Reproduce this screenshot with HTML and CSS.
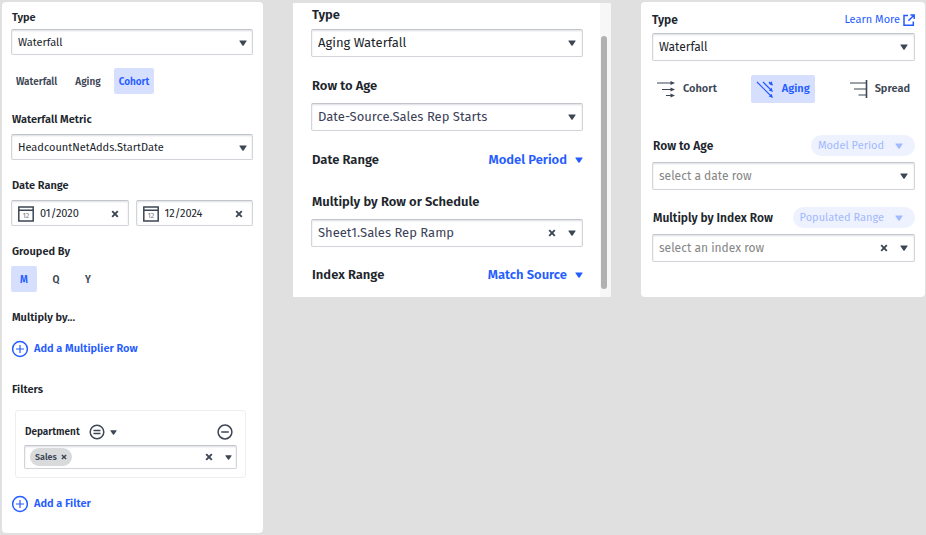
FILE: index.html
```
<!DOCTYPE html>
<html lang="en">
<head>
<meta charset="utf-8">
<meta name="viewport" content="width=device-width, initial-scale=1">
<title>Waterfall settings</title>
<link rel="stylesheet" href="styles.css">
</head>
<body>
<svg class="defs" aria-hidden="true">
  <symbol id="caret" viewBox="0 0 8 6"><path d="M.8 .4h6.4q.8 0 .4.7L4.600 5.400q-.6.6-1.200 0L.4 1.100Q0 .4.8.4z" fill="currentColor"/></symbol>
  <symbol id="cross" viewBox="0 0 8 8"><path d="M1.2 1.2l5.6 5.6M6.800 1.200L1.200 6.800" stroke="currentColor" stroke-width="1.9" fill="none"/></symbol>
  <symbol id="plus" viewBox="0 0 18 18"><circle cx="9" cy="9" r="7.4" fill="none" stroke="currentColor" stroke-width="1.5"/><path d="M5 9h8M9 5v8" stroke="currentColor" stroke-width="1.2"/></symbol>
</svg>
<main class="board">
  <form class="panel compact">
    <div class="field first">
      <label for="a-type">Type</label>
      <div class="box"><select id="a-type"><option>Waterfall</option></select><svg class="caret"><use href="#caret"/></svg></div>
    </div>
    <div class="tabs">
      <button type="button">Waterfall</button>
      <button type="button">Aging</button>
      <button type="button" class="active">Cohort</button>
    </div>
    <div class="field">
      <label for="a-metric">Waterfall Metric</label>
      <div class="box"><select id="a-metric"><option>HeadcountNetAdds.StartDate</option></select><svg class="caret"><use href="#caret"/></svg></div>
    </div>
    <div class="field">
      <label for="a-from">Date Range</label>
      <div class="dates">
        <div class="box date"><svg class="cal" viewBox="0 0 16 16"><path d="M.8 1h14.4v14H.8zM1 4.200h14"/><text x="8" y="12" text-anchor="middle">12</text></svg><input id="a-from" type="text" value="01/2020"><button type="button" class="clear" aria-label="Clear"><svg><use href="#cross"/></svg></button></div>
        <div class="box date"><svg class="cal" viewBox="0 0 16 16"><path d="M.8 1h14.4v14H.8zM1 4.200h14"/><text x="8" y="12" text-anchor="middle">12</text></svg><input type="text" value="12/2024" aria-label="End date"><button type="button" class="clear" aria-label="Clear"><svg><use href="#cross"/></svg></button></div>
      </div>
    </div>
    <div class="field">
      <h2>Grouped By</h2>
      <div class="periods">
        <button type="button" class="active">M</button>
        <button type="button">Q</button>
        <button type="button">Y</button>
      </div>
    </div>
    <div class="field">
      <h2>Multiply by...</h2>
      <button type="button" class="add"><svg><use href="#plus"/></svg>Add a Multiplier Row</button>
    </div>
    <div class="field filters">
      <h2>Filters</h2>
      <div class="filter">
        <div class="filter-head">
          <label for="a-dept">Department</label>
          <button type="button" class="operator" aria-label="Equals"><svg class="round" viewBox="0 0 16 16"><circle cx="8" cy="8" r="6.8"/><path d="M4.5 6.600h7M4.500 9.400h7"/></svg><svg class="caret"><use href="#caret"/></svg></button>
          <button type="button" class="remove" aria-label="Remove filter"><svg class="round" viewBox="0 0 16 16"><circle cx="8" cy="8" r="6.9"/><path d="M4.200 8h7.600"/></svg></button>
        </div>
        <div class="box multi">
          <span class="chip">Sales<button type="button" class="clear" aria-label="Remove Sales"><svg><use href="#cross"/></svg></button></span>
          <input id="a-dept" type="text">
          <button type="button" class="clear" aria-label="Clear"><svg><use href="#cross"/></svg></button>
          <svg class="caret"><use href="#caret"/></svg>
        </div>
      </div>
      <button type="button" class="add"><svg><use href="#plus"/></svg>Add a Filter</button>
    </div>
  </form>

  <form class="panel scrolling">
    <div class="content">
      <div class="field first">
        <label for="b-type">Type</label>
        <div class="box"><select id="b-type"><option>Aging Waterfall</option></select><svg class="caret"><use href="#caret"/></svg></div>
      </div>
      <div class="field">
        <label for="b-row">Row to Age</label>
        <div class="box slate"><select id="b-row"><option>Date-Source.Sales Rep Starts</option></select><svg class="caret"><use href="#caret"/></svg></div>
      </div>
      <div class="field line">
        <h2>Date Range</h2>
        <button type="button" class="menu">Model Period<svg class="caret"><use href="#caret"/></svg></button>
      </div>
      <div class="field">
        <label for="b-mult">Multiply by Row or Schedule</label>
        <div class="box slate"><select id="b-mult"><option>Sheet1.Sales Rep Ramp</option></select><button type="button" class="clear" aria-label="Clear"><svg><use href="#cross"/></svg></button><svg class="caret"><use href="#caret"/></svg></div>
      </div>
      <div class="field line last">
        <h2>Index Range</h2>
        <button type="button" class="menu">Match Source<svg class="caret"><use href="#caret"/></svg></button>
      </div>
    </div>
    <div class="track"><div class="thumb"></div></div>
  </form>

  <form class="panel wide">
    <div class="field first">
      <div class="head"><label for="c-type">Type</label><a href="#learn">Learn More<svg viewBox="0 0 12 12"><path d="M5 1.500H1v9.700h9.300V7.500M7.400.900h3.800v4M11.200 1L5.400 6.800"/></svg></a></div>
      <div class="box"><select id="c-type"><option>Waterfall</option></select><svg class="caret"><use href="#caret"/></svg></div>
    </div>
    <div class="modes">
      <button type="button"><svg viewBox="0 0 20 18"><path class="thin" d="M0 3h14M5 9.500h9M9 15.500h5"/><path class="tip" d="M13.500 1l4.500 2-4.500 2zM13.500 7.500l4.500 2-4.500 2zM13.500 13.500l4.500 2-4.500 2z"/></svg>Cohort</button>
      <button type="button" class="active"><svg viewBox="0 0 20 18"><path class="thin" d="M1 2l14 14M7 2l8.500 8.500M13 2l3 3"/><path class="tip" d="M17 18l-4.200-1.600 2.800-2.600zM17 12l-4.200-1.600 2.800-2.600zM17 5.500l-4.200-1.600 2.800-2.600z"/></svg>Aging</button>
      <button type="button"><svg viewBox="0 0 20 18"><path class="thin" d="M1 3h16M5 9h12M9.500 15h8"/><path class="wall" d="M17.500 0v18"/></svg>Spread</button>
    </div>
    <div class="field">
      <div class="head"><label for="c-row">Row to Age</label><button type="button" class="pill" disabled>Model Period<svg class="caret"><use href="#caret"/></svg></button></div>
      <div class="box empty"><select id="c-row"><option>select a date row</option></select><svg class="caret"><use href="#caret"/></svg></div>
    </div>
    <div class="field">
      <div class="head"><label for="c-mult">Multiply by Index Row</label><button type="button" class="pill" disabled>Populated Range<svg class="caret"><use href="#caret"/></svg></button></div>
      <div class="box empty"><select id="c-mult"><option>select an index row</option></select><button type="button" class="clear" aria-label="Clear"><svg><use href="#cross"/></svg></button><svg class="caret"><use href="#caret"/></svg></div>
    </div>
  </form>
</main>
</body>
</html>
```
FILE: styles.css
```
:root {
  --ink: #20252c;
  --slate: #3c4654;
  --blue: #245cff;
  --tint: #d7dfff;
  --line: #d3d4d9;
}
* { box-sizing: border-box; }
body {
  margin: 0;
  background: #e0e0e0;
  color: var(--ink);
  font-family: "Fira Sans", "Noto Sans", sans-serif;
  font-size: 12px;
  line-height: 16px;
}
.defs { position: absolute; width: 0; height: 0; }
button, input, select {
  margin: 0;
  padding: 0;
  border: 0;
  background: none;
  color: inherit;
  font: inherit;
  appearance: none;
}
button, a { display: inline-flex; align-items: center; }
svg { display: block; flex: none; }
h2, label {
  display: block;
  margin: 0;
  padding-left: 1px;
  font-size: inherit;
  font-weight: 600;
  white-space: nowrap;
}

.board {
  display: grid;
  grid-template-columns: 261fr 318fr 284fr;
  gap: 30px;
  align-items: start;
  padding: 2px 1px 2px 2px;
}
.panel { background: #fff; border-radius: 4px; min-width: 0; }

.box {
  display: flex;
  align-items: center;
  gap: 12px;
  height: 28px;
  padding: 0 6px;
  border: 1px solid var(--line);
  border-top-color: #c2c5cc;
  border-radius: 2px;
  background: #fff;
  box-shadow: inset 0 1px 2px #dcdde2;
}
.box select, .box input { flex: 1; min-width: 0; width: 0; }
.slate { color: #3b3f58; }
.empty select { color: #858585; }
.caret { width: 8px; height: 6px; color: var(--slate); }
.clear { color: var(--slate); }
.clear svg { width: 8px; height: 8px; }
.active { background: var(--tint); color: var(--blue); border-radius: 2px; }

/* Cohort panel */
.compact { padding: 8px 10px 20px 9px; font-size: 11px; }
.compact .field { margin-top: 18px; }
.compact .field > label, .compact .field > h2 { margin-bottom: 6px; }
.compact .first { margin-top: 0; }
.compact .first > label { margin-bottom: 3px; }
.compact .box { height: 26px; padding: 1px 5px 0 6px; }
.tabs { display: flex; gap: 8px; margin-top: 13px; }
.tabs button, .periods button {
  height: 26px;
  padding: 1px 5px 0;
  color: var(--slate);
  font-size: 10px;
  font-weight: 600;
}
.periods { display: flex; gap: 6px; }
.periods button { width: 26px; justify-content: center; }
.compact button.active { color: var(--blue); }
.dates { display: grid; grid-template-columns: 1fr 1fr; gap: 7px; }
.compact .date { gap: 6px; padding-right: 9px; }
.cal { width: 16px; height: 16px; fill: none; stroke: var(--slate); stroke-width: 1.5; }
.cal text { font-size: 7px; fill: #6d7580; stroke: none; }
.add { gap: 5px; color: var(--blue); font-weight: 600; }
.add svg { width: 18px; height: 18px; }
.compact .field > .add { display: flex; margin-top: 14px; height: 18px; }
.compact .filters { margin-top: 24px; }
.filter {
  margin: 12px 7px 0 4px;
  padding: 12px 8px 8px;
  border: 1px solid #eeeeef;
  border-radius: 3px;
}
.filter-head { display: flex; align-items: center; height: 18px; margin-bottom: 4px; font-size: 10px; }
.operator { gap: 5px; margin-left: 9px; color: var(--slate); }
.remove { margin-left: auto; margin-right: 4px; color: var(--slate); }
.round { width: 16px; height: 16px; fill: none; stroke: currentColor; stroke-width: 1.5; }
.compact .multi { height: 24px; padding: 0 4px 0 5px; }
.filter .caret { width: 7px; height: 5px; }
.chip {
  display: flex;
  align-items: center;
  gap: 4px;
  height: 18px;
  padding: 0 5px;
  border-radius: 9px;
  background: #d9dadc;
  color: var(--slate);
  font-size: 9px;
  font-weight: 600;
}
.chip .clear svg { width: 6px; height: 6px; }
.compact .filters > .add { margin-top: 17px; }

/* Aging panel */
.scrolling { display: flex; margin-top: 1px; border-radius: 0; font-size: 13px; }
.content { flex: 1; min-width: 0; padding: 4px 17px 14px 18px; }
.scrolling .field { margin-top: 21px; }
.scrolling .first { margin-top: 0; }
.scrolling .field > label { margin-bottom: 9px; }
.scrolling .first > label { margin-bottom: 6px; }
.line { display: flex; justify-content: space-between; padding-bottom: 5px; }
.scrolling .last { padding-bottom: 0; }
.scrolling .last { margin-top: 20px; }
.menu { gap: 8px; color: var(--blue); font-weight: 600; }
.menu .caret, .pill .caret { color: inherit; }
.track { width: 11px; padding: 33px 4px 8px 1px; background: #f7f7f8; display: flex; }
.thumb { flex: 1; border-radius: 3px; background: #b1b1b1; }

/* Mode panel */
.wide { padding: 7px 10px 35px 11px; }
.wide .head { display: flex; align-items: center; justify-content: space-between; height: 21px; margin-bottom: 6px; }
.wide .first .head { margin-bottom: 3px; }
.wide .field { margin-top: 17px; }
.wide .first { margin-top: 0; }
.wide .first label { padding-left: 0; }
.head a { gap: 3px; color: var(--blue); font-size: 11px; text-decoration: none; }
.head a svg { width: 12px; height: 12px; fill: none; stroke: currentColor; stroke-width: 1.5; }
.modes { display: flex; justify-content: space-between; margin: 14px 0 32px; }
.modes button { gap: 6px; height: 28px; padding: 0 5px; color: var(--slate); font-size: 11px; font-weight: 600; }
.modes button.active { color: var(--blue); }
.modes svg { width: 20px; height: 18px; stroke: currentColor; fill: none; }
.modes .thin { stroke-width: 1.2; }
.modes .tip { fill: currentColor; stroke: none; }
.modes .wall { stroke-width: 1.6; }
.pill {
  gap: 11px;
  height: 21px;
  padding: 0 12px 0 7px;
  border-radius: 11px;
  background: #eef2ff;
  color: #a2b9fd;
  font-size: 11px;
}
```
